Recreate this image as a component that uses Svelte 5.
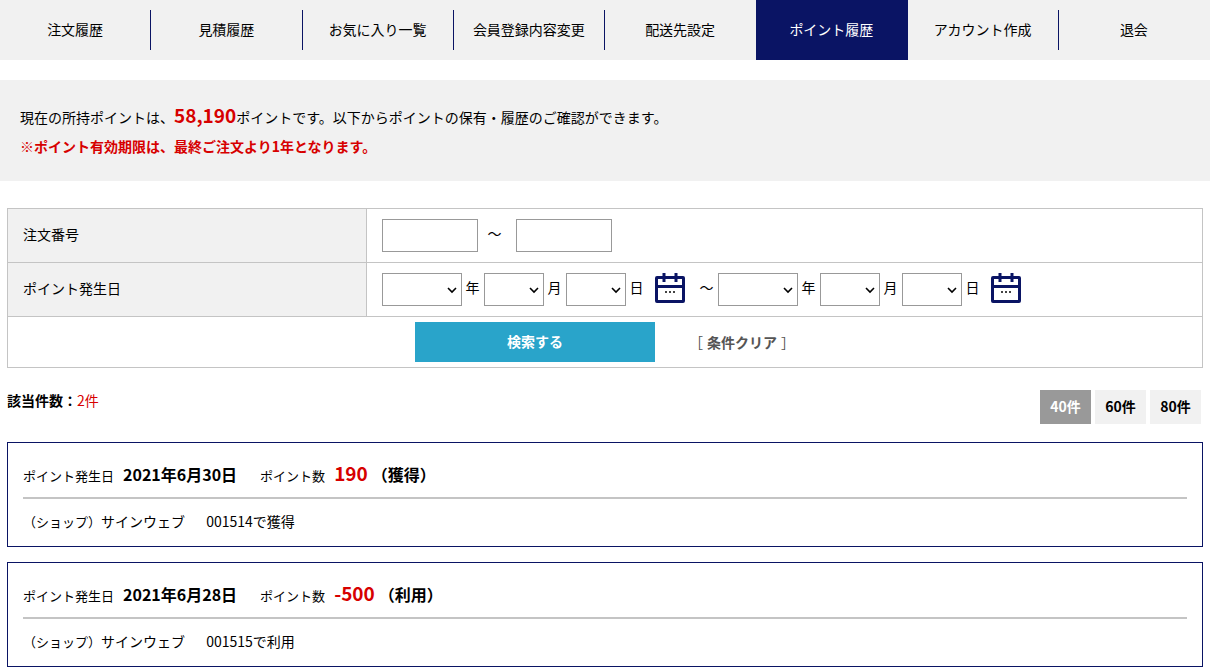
<script lang="ts">
	const navItems = [
		{ text: '注文履歴', link: '#order' },
		{ text: '見積履歴', link: '#estimate' },
		{ text: 'お気に入り一覧', link: '#favorite' },
		{ text: '会員登録内容変更', link: '#member' },
		{ text: '配送先設定', link: '#address' },
		{ text: 'ポイント履歴', link: '#point' },
		{ text: 'アカウント作成', link: '#account' },
		{ text: '退会', link: '#leave' }
	];
	const current = '#point';

	const histories = [
		{ date: '2021年6月30日', point: '190', type: '獲得', order: '001514' },
		{ date: '2021年6月28日', point: '-500', type: '利用', order: '001515' }
	];

	const years = [2019, 2020, 2021];
	const months = Array.from({ length: 12 }, (_, i) => i + 1);
	const days = Array.from({ length: 31 }, (_, i) => i + 1);

	let limit = $state(40);
</script>

{#snippet dateFields(name: string, label: string)}
	<select class="year" name="{name}-year" aria-label="{label} 年">
		<option value=""></option>
		{#each years as year}<option>{year}</option>{/each}
	</select>
	<span>年</span>
	<select name="{name}-month" aria-label="{label} 月">
		<option value=""></option>
		{#each months as month}<option>{month}</option>{/each}
	</select>
	<span>月</span>
	<select name="{name}-day" aria-label="{label} 日">
		<option value=""></option>
		{#each days as day}<option>{day}</option>{/each}
	</select>
	<span>日</span>
	<button type="button" class="calendar" aria-label="{label} カレンダー">
		<svg width="30" height="30" viewBox="0 0 30 30">
			<rect x="1.5" y="4.5" width="27" height="24" rx="0.5" fill="none" stroke="#0a1464" stroke-width="3" />
			<path d="M1 13.5h28M9 0v9M21 0v9" fill="none" stroke="#0a1464" stroke-width="3" />
			<path d="M10 18h2v2h-2zM14 18h2v2h-2zM18 18h2v2h-2z" fill="#444" />
		</svg>
	</button>
{/snippet}

<nav>
	<ul>
		{#each navItems as item}
			<li class:active={item.link === current}>
				<a href={item.link}>{item.text}</a>
			</li>
		{/each}
	</ul>
</nav>

<div class="intro">
	<p>現在の所持ポイントは、<strong class="total">58,190</strong>ポイントです。以下からポイントの保有・履歴のご確認ができます。</p>
	<p class="notice">※ポイント有効期限は、最終ご注文より1年となります。</p>
</div>

<main>
	<form onsubmit={(e) => e.preventDefault()}>
		<table>
			<tbody>
				<tr>
					<th scope="row"><label for="order-from">注文番号</label></th>
					<td>
						<div class="fields">
							<input id="order-from" type="text" />
							<span class="range">～</span>
							<input type="text" aria-label="注文番号 終了" />
						</div>
					</td>
				</tr>
				<tr>
					<th scope="row">ポイント発生日</th>
					<td>
						<div class="fields">
							{@render dateFields('from', '開始')}
							<span>～</span>
							{@render dateFields('to', '終了')}
						</div>
					</td>
				</tr>
				<tr>
					<td colspan="2" class="submit">
						<div class="actions">
							<button type="submit" class="search">検索する</button>
							<button type="reset" class="clear"><span>［</span>条件クリア<span>］</span></button>
						</div>
					</td>
				</tr>
			</tbody>
		</table>
	</form>

	<div class="result">
		<p class="count">該当件数：<span>2件</span></p>
		<div class="limits">
			{#each [40, 60, 80] as n}
				<button type="button" class:selected={limit === n} onclick={() => (limit = n)}>{n}件</button>
			{/each}
		</div>
	</div>

	<ul class="history">
		{#each histories as item}
			<li>
				<div class="head">
					<span class="label">ポイント発生日</span>
					<strong class="date">{item.date}</strong>
					<span class="label">ポイント数</span>
					<strong class="point">{item.point}</strong>
					<strong>（{item.type}）</strong>
				</div>
				<p class="detail">
					<span class="kind">（ショップ）</span>サインウェブ
					<span class="order">{item.order}で{item.type}</span>
				</p>
			</li>
		{/each}
	</ul>
</main>

<style>
	:global(body) {
		background: #fff;
		color: #000;
		font-family: 'Noto Sans CJK JP', sans-serif;
		font-size: 14px;
		line-height: 20px;
	}

	ul,
	p {
		margin: 0;
		padding: 0;
		list-style: none;
	}

	button,
	input,
	select {
		box-sizing: border-box;
		margin: 0;
		font: inherit;
	}

	button {
		padding: 0;
		border: none;
		background: none;
		cursor: pointer;
	}

	nav ul {
		display: flex;
		background: #f1f1f1;
	}

	nav li {
		flex: 1 1 0;
		padding: 10px 0;
	}

	nav a {
		display: block;
		padding-bottom: 2px;
		border-right: 1px solid #0a1464;
		color: #000;
		line-height: 38px;
		text-align: center;
		text-decoration: none;
		white-space: nowrap;
	}

	nav li:last-child a,
	nav li:has(+ .active) a {
		border-right-color: transparent;
	}

	nav .active {
		background: #0a1464;
	}

	nav .active a {
		color: #fff;
	}

	.intro {
		margin-top: 20px;
		padding: 23px 20px 20px;
		background: #f1f1f1;
		line-height: 29px;
	}

	.total {
		color: #d70000;
		font-size: 19px;
		line-height: 20px;
	}

	.notice {
		color: #d70000;
		font-weight: bold;
	}

	main {
		padding: 0 7px;
	}

	table {
		width: 100%;
		margin-top: 27px;
		border-collapse: collapse;
	}

	th,
	td {
		padding: 10px 15px;
		border: 1px solid #c4c4c4;
	}

	th {
		width: 30%;
		box-sizing: border-box;
		padding-bottom: 14px;
		background: #f1f1f1;
		font-weight: normal;
		text-align: left;
	}

	.fields {
		display: flex;
		align-items: center;
		gap: 4px;
	}

	.fields span {
		padding-bottom: 5px;
	}

	.fields .range {
		margin: 0 10px 0 6px;
	}

	input,
	select {
		height: 33px;
		border: 1px solid #999;
		border-radius: 0;
		background: #fff;
	}

	input {
		width: 96px;
	}

	select {
		width: 60px;
		padding: 0 20px 0 4px;
		appearance: none;
		background: #fff
			url("data:image/svg+xml,%3Csvg xmlns='http://www.w3.org/2000/svg' width='10' height='8'%3E%3Cpath d='M1 2l4 4 4-4' fill='none' stroke='%23000' stroke-width='1.6'/%3E%3C/svg%3E")
			no-repeat right 4px center;
	}

	select.year {
		width: 80px;
	}

	.calendar {
		align-self: flex-start;
		height: 30px;
		margin: 0 11px 0 7px;
	}

	.calendar svg {
		display: block;
	}

	.submit {
		padding: 5px;
	}

	.actions {
		display: flex;
		justify-content: center;
		gap: 34px;
	}

	.search {
		width: 240px;
		height: 40px;
		padding-bottom: 2px;
		background: #29a4ca;
		color: #fff;
		font-weight: bold;
	}

	.clear {
		color: #555;
		font-weight: bold;
	}

	.clear span {
		margin: 0 4px 0 0;
		font-weight: normal;
	}

	.clear span:last-child {
		margin: 0 0 0 4px;
	}

	.result {
		display: flex;
		justify-content: space-between;
		margin-top: 22px;
		padding-right: 2px;
	}

	.count {
		font-weight: bold;
	}

	.count span {
		color: #d70000;
		font-weight: normal;
	}

	.limits {
		display: flex;
		gap: 4px;
	}

	.limits button {
		width: 51px;
		height: 34px;
		padding-bottom: 2px;
		background: #f1f1f1;
		font-weight: bold;
	}

	.limits .selected {
		background: #999;
		color: #fff;
	}

	.history {
		display: grid;
		gap: 15px;
		margin-top: 18px;
	}

	.history li {
		padding: 15px 15px 14px;
		border: 1px solid #0a1464;
	}

	.head {
		display: flex;
		align-items: baseline;
		padding-bottom: 6px;
		border-bottom: 2px solid #c4c4c4;
		font-size: 16px;
		line-height: 30px;
	}

	.label {
		margin-right: 9px;
		font-size: 13px;
	}

	.date {
		margin-right: 23px;
	}

	.point {
		margin-right: 4px;
		color: #d70000;
		font-size: 19px;
	}

	.detail {
		padding-top: 12px;
	}

	.kind {
		font-size: 13px;
	}

	.order {
		margin-left: 18px;
	}
</style>
